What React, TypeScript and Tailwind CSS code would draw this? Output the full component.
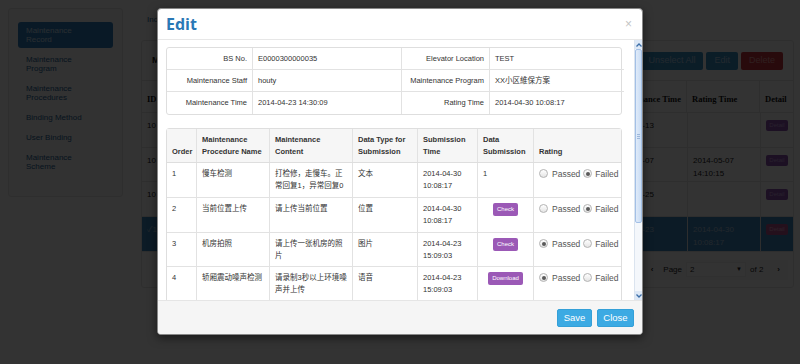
const sans = "font-['Liberation_Sans','Noto_Sans_CJK_SC',sans-serif]"

const navItems = [
  "Maintenance Program",
  "Maintenance Procedures",
  "Binding Method",
  "User Binding",
  "Maintenance Scheme",
]

const bgRows = [
  { id: "10", d1: "2014-05-13", r: ["", ""], h: "h-[35px]", sel: false },
  { id: "10", d1: "2014-05-07", r: ["2014-05-07", "14:10:15"], h: "h-[34px]", sel: false },
  { id: "10", d1: "2014-04-25", r: ["", ""], h: "h-[35px]", sel: false },
  { id: "✓1", d1: "2014-04-23", r: ["2014-04-30", "10:08:17"], h: "h-[35px]", sel: true },
]

const info = [
  ["BS No.", "E0000300000035", "Elevator Location", "TEST", "h-[22px] border-b"],
  ["Maintenance Staff", "houty", "Maintenance Program", "XX小区維保方案", "h-[22px] border-b"],
  ["Maintenance Time", "2014-04-23 14:30:09", "Rating Time", "2014-04-30 10:08:17", "h-[22px]"],
]

const heads = [
  "Order",
  "Maintenance Procedure Name",
  "Maintenance Content",
  "Data Type for Submission",
  "Submission Time",
  "Data Submission",
  "Rating",
]

type Proc = {
  order: string
  name: string
  content: string
  type: string
  time: string
  data: string
  passed: boolean
  h: string
}

const procs: Proc[] = [
  { order: "1", name: "慢车检测", content: "打检修，走慢车。正常回复1，异常回复0", type: "文本", time: "2014-04-30 10:08:17", data: "1", passed: false, h: "h-[35px]" },
  { order: "2", name: "当前位置上传", content: "请上传当前位置", type: "位置", time: "2014-04-30 10:08:17", data: "Check", passed: false, h: "h-[35px]" },
  { order: "3", name: "机房拍照", content: "请上传一张机房的照片", type: "图片", time: "2014-04-23 15:09:03", data: "Check", passed: true, h: "h-[34px]" },
  { order: "4", name: "轿厢震动噪声检测", content: "请录制3秒以上环境噪声并上传", type: "语音", time: "2014-04-23 15:09:03", data: "Download", passed: true, h: "h-[34px]" },
]

function Radio({ checked }: { checked: boolean }) {
  return (
    <span className="w-[9px] h-[9px] shrink-0 rounded-full border border-[#b3b3b3] bg-linear-to-b from-white to-[#e4e4e4] flex items-center justify-center">
      {checked && <span className="w-[4px] h-[4px] rounded-full bg-[#5a5a5a]" />}
    </span>
  )
}

function Chevron({ up }: { up?: boolean }) {
  return (
    <svg width="6" height="4" viewBox="0 0 6 4">
      <path
        d={up ? "M0.5 3.5 L3 1 L5.5 3.5" : "M0.5 0.5 L3 3 L5.5 0.5"}
        fill="none"
        stroke="#3b6ea8"
        strokeWidth="1.3"
      />
    </svg>
  )
}

// page under the backdrop, drawn in its normal colours
function Background() {
  return (
    <div className="flex items-start gap-[18px] px-2 pt-2">
      <aside className="w-[115px] h-[189px] shrink-0 rounded-[3px] border border-[#e6e6e6] bg-[#f8f8f8] pt-[13px] px-[9px] flex flex-col gap-[3px] text-[8px] leading-[9px] text-[#2a6496]">
        <div className="rounded-[3px] bg-[#2f7dbd] text-[#c9e0f2] px-2 py-1">
          Maintenance
          <br />
          Record
        </div>
        {navItems.map((t) => (
          <div key={t} className="px-2 py-1 w-[80px]">
            {t}
          </div>
        ))}
      </aside>

      <main className="flex-1 flex flex-col">
        <div className="h-[32px] pl-[6px] pt-[6px] text-[8px] text-[#2a6496]">Index</div>
        <div className="border border-[#e6e6e6] rounded-[3px]">
          <div className="h-[39px] flex items-center justify-between pl-[10px] pr-[10px]">
            <span className="text-[9px] font-bold text-[#222]">M</span>
            <div className="flex gap-[3px] text-[9px]">
              <span className="h-[18px] px-[8px] flex items-center rounded-[2px] bg-[#3a8fc4] text-[#aacde6]">Unselect All</span>
              <span className="h-[18px] px-[8px] flex items-center rounded-[2px] bg-[#3a8fc4] text-[#aacde6]">Edit</span>
              <span className="h-[18px] px-[8px] flex items-center rounded-[2px] bg-[#c9363d] text-[#e89a9d]">Delete</span>
            </div>
          </div>
          <div className="grid grid-cols-[40px_110px_110px_90px_116px_79px_73px_33px] h-[33px] border-y border-[#e6e6e6] font-['Liberation_Serif',serif] text-[8.5px] font-bold text-[#111]">
            {["ID", "", "", "", "", "Maintenance Time", "Rating Time", "Detail"].map((h, i) => (
              <div key={i} className="flex items-end px-[5px] pb-[6px] border-r border-[#e6e6e6] last:border-r-0">
                {h}
              </div>
            ))}
          </div>
          {bgRows.map((r, i) => (
            <div
              key={i}
              className={`grid grid-cols-[40px_110px_110px_90px_116px_79px_73px_33px] ${r.h} border-b border-[#e6e6e6] text-[8px] leading-[13px] ${r.sel ? "bg-[#3f86bd] text-[#a9c5dc]" : "text-[#222]"}`}
            >
              <div className="px-[5px] pt-[6px]">{r.id}</div>
              <div />
              <div />
              <div />
              <div />
              <div className="px-[5px] pt-[6px]">{r.d1}</div>
              <div className="px-[5px] pt-[6px] border-l border-[#e6e6e6]">
                {r.r[0]}
                <br />
                {r.r[1]}
              </div>
              <div className="pl-[5px] pt-[7px] border-l border-[#e6e6e6]">
                <span className={`block w-[22px] h-[11px] rounded-[2px] text-[6px] leading-[11px] text-center ${r.sel ? "bg-[#b4528e] text-[#e0a6cb]" : "bg-[#8a4fb0] text-[#c8a4dc]"}`}>
                  Detail
                </span>
              </div>
            </div>
          ))}
          <div className="h-[35px] flex items-center justify-end pr-[5px]">
            <div className="h-[20px] flex items-center gap-[4px] px-[8px] bg-[#fafafa] text-[8px] text-[#222]">
              <span className="mr-[6px] font-bold">‹</span>
              <span>Page</span>
              <span className="w-[60px] h-[15px] bg-white border border-[#eee] flex items-center justify-between px-[3px]">
                2<span className="text-[6px]">▼</span>
              </span>
              <span>of 2</span>
              <span className="ml-[10px] font-bold">›</span>
            </div>
          </div>
        </div>
      </main>
    </div>
  )
}

function Modal() {
  return (
    <div className={`absolute left-[157px] top-[8px] w-[486px] h-[327px] bg-white rounded-[4px] border border-[#888] shadow-[0_3px_10px_rgba(0,0,0,0.5)] flex flex-col overflow-hidden ${sans}`}>
      <div className="h-[31px] shrink-0 border-b border-[#e7e7e7] flex items-center justify-between pl-[8px] pr-[10px]">
        <span className="font-['Open_Sans',sans-serif] font-bold text-[16px] text-[#2a78b5] leading-none">Edit</span>
        <span className="text-[12px] text-[#c4c4c4] leading-none">×</span>
      </div>

      <div className="h-[260px] shrink-0 flex">
        <div className="flex-1 overflow-hidden pl-[8px] pr-[12px] pt-[7px] text-[#333] text-[7.5px]">
          <div className="grid grid-cols-[86px_149px_88px_134px] border border-[#dedede] rounded-[3px]">
            {info.map((r) => (
              <div key={r[0]} className="contents">
                <div className={`${r[4]} border-[#e2e2e2] border-r flex items-center justify-end pr-[5px]`}>{r[0]}</div>
                <div className={`${r[4]} border-[#e2e2e2] border-r flex items-center pl-[5px]`}>{r[1]}</div>
                <div className={`${r[4]} border-[#e2e2e2] border-r flex items-center justify-end pr-[5px]`}>{r[2]}</div>
                <div className={`${r[4]} border-[#e2e2e2] flex items-center pl-[5px]`}>{r[3]}</div>
              </div>
            ))}
          </div>

          <div className="mt-[13px] border border-[#dedede] rounded-t-[3px] leading-[11.5px]">
            <div className="grid grid-cols-[30px_73px_83px_65px_60px_56px_89px] h-[34px] bg-[#f6f6f6] border-b border-[#dedede] font-bold">
              {heads.map((h) => (
                <div key={h} className="flex items-end px-[5px] pb-[5px] border-r border-[#e2e2e2] last:border-r-0">
                  {h}
                </div>
              ))}
            </div>
            {procs.map((p) => (
              <div key={p.order} className={`grid grid-cols-[30px_73px_83px_65px_60px_56px_89px] ${p.h} border-b border-[#e2e2e2]`}>
                <div className="px-[5px] pt-[5px] border-r border-[#e2e2e2]">{p.order}</div>
                <div className="px-[5px] pt-[5px] border-r border-[#e2e2e2]">{p.name}</div>
                <div className="px-[5px] pt-[5px] border-r border-[#e2e2e2]">{p.content}</div>
                <div className="px-[5px] pt-[5px] border-r border-[#e2e2e2]">{p.type}</div>
                <div className="px-[5px] pt-[5px] border-r border-[#e2e2e2]">{p.time}</div>
                <div className="px-[5px] pt-[5px] border-r border-[#e2e2e2]">
                  {p.data === "1" ? (
                    "1"
                  ) : (
                    <div className="flex justify-center">
                      <span className="h-[13px] px-[4px] rounded-[2px] bg-[#9b59b6] text-white text-[6px] leading-[13px]">{p.data}</span>
                    </div>
                  )}
                </div>
                <div className="pl-[5px] pt-[6px] flex items-start text-[8.5px] leading-[10px] text-[#555]">
                  <Radio checked={p.passed} />
                  <span className="ml-[4px]">Passed</span>
                  <span className="ml-[3px]">
                    <Radio checked={!p.passed} />
                  </span>
                  <span className="ml-[3px]">Failed</span>
                </div>
              </div>
            ))}
          </div>
        </div>

        <div className="w-[8px] shrink-0 flex flex-col bg-[#f4f7fb] border-l border-[#dbe4ef]">
          <div className="h-[9px] bg-[#dde8f6] flex items-center justify-center">
            <Chevron up />
          </div>
          <div className="h-[174px] rounded-[2px] border border-[#a3c0e6] bg-linear-to-r from-[#e0ebf9] to-[#c9dcf4] flex items-center justify-center">
            <div className="flex flex-col gap-[1px]">
              <span className="w-[3px] h-px bg-[#9db7da]" />
              <span className="w-[3px] h-px bg-[#9db7da]" />
              <span className="w-[3px] h-px bg-[#9db7da]" />
            </div>
          </div>
          <div className="flex-1" />
          <div className="h-[9px] bg-[#dde8f6] flex items-center justify-center">
            <Chevron />
          </div>
        </div>
      </div>

      <div className="flex-1 bg-[#f5f5f5] border-t border-[#e5e5e5] flex justify-end items-start pt-[8px] pr-[8px] gap-[5px]">
        <span className="h-[18px] w-[35px] rounded-[2px] bg-[#3caae3] border border-[#34a0d8] text-white text-[9.5px] flex items-center justify-center">Save</span>
        <span className="h-[18px] w-[37px] rounded-[2px] bg-[#3caae3] border border-[#34a0d8] text-white text-[9.5px] flex items-center justify-center">Close</span>
      </div>
    </div>
  )
}

export default function App() {
  return (
    <div className={`relative w-[800px] h-[364px] overflow-hidden bg-white ${sans}`}>
      <Background />
      {/* modal backdrop */}
      <div className="absolute inset-0 bg-[#000000]/80" />
      <Modal />
    </div>
  )
}
